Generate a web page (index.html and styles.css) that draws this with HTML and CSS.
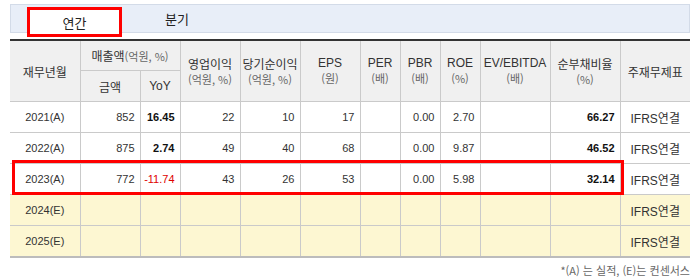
FILE: index.html
```
<!DOCTYPE html>
<html lang="ko">
<head>
<meta charset="utf-8">
<link rel="stylesheet" href="styles.css">
</head>
<body>
<div class="wrap">
  <div class="tabbar">
    <div class="tab active">연간</div>
    <div class="tab">분기</div>
  </div>
  <div class="tablebox">
    <table class="fin">
      <colgroup>
        <col style="width:70px"><col style="width:60px"><col style="width:40px"><col style="width:60px"><col style="width:60px"><col style="width:60px"><col style="width:40px"><col style="width:40px"><col style="width:40px"><col style="width:70px"><col style="width:70px"><col style="width:70px">
      </colgroup>
      <thead>
        <tr class="h1">
          <th rowspan="2" class="first">재무년월</th>
          <th colspan="2">매출액<span class="sub">(억원, %)</span></th>
          <th rowspan="2">영업이익<br><span class="sub">(억원, %)</span></th>
          <th rowspan="2">당기순이익<br><span class="sub">(억원, %)</span></th>
          <th rowspan="2" class="en">EPS<br><span class="sub">(원)</span></th>
          <th rowspan="2" class="en">PER<br><span class="sub">(배)</span></th>
          <th rowspan="2" class="en">PBR<br><span class="sub">(배)</span></th>
          <th rowspan="2" class="en">ROE<br><span class="sub">(%)</span></th>
          <th rowspan="2" class="en">EV/EBITDA<br><span class="sub">(배)</span></th>
          <th rowspan="2">순부채비율<br><span class="sub">(%)</span></th>
          <th rowspan="2" class="last">주재무제표</th>
        </tr>
        <tr class="h2">
          <th>금액</th>
          <th class="en">YoY</th>
        </tr>
      </thead>
      <tbody>
        <tr>
          <td class="first yr">2021(A)</td><td>852</td><td class="b">16.45</td><td>22</td><td>10</td><td>17</td><td></td><td>0.00</td><td>2.70</td><td></td><td class="b">66.27</td><td class="last std">IFRS연결</td>
        </tr>
        <tr>
          <td class="first yr">2022(A)</td><td>875</td><td class="b">2.74</td><td>49</td><td>40</td><td>68</td><td></td><td>0.00</td><td>9.87</td><td></td><td class="b">46.52</td><td class="last std">IFRS연결</td>
        </tr>
        <tr>
          <td class="first yr">2023(A)</td><td>772</td><td class="neg">-11.74</td><td>43</td><td>26</td><td>53</td><td></td><td>0.00</td><td>5.98</td><td></td><td class="b">32.14</td><td class="last std">IFRS연결</td>
        </tr>
        <tr class="est">
          <td class="first yr">2024(E)</td><td></td><td></td><td></td><td></td><td></td><td></td><td></td><td></td><td></td><td></td><td class="last std">IFRS연결</td>
        </tr>
        <tr class="est">
          <td class="first yr">2025(E)</td><td></td><td></td><td></td><td></td><td></td><td></td><td></td><td></td><td></td><td></td><td class="last std">IFRS연결</td>
        </tr>
      </tbody>
    </table>
    <div class="highlight"></div>
  </div>
  <div class="note">*(A) 는 실적, (E)는 컨센서스</div>
</div>
</body>
</html>
```
FILE: styles.css
```
html, body {
  margin: 0;
  padding: 0;
  background: #fff;
}
body {
  font-family: "Noto Sans CJK KR", "Liberation Sans", sans-serif;
  color: #333;
}
.wrap {
  width: 680px;
  padding: 4px 0 0 10px;
}
.tabbar {
  box-sizing: border-box;
  height: 29px;
  background: #e8eef8;
  border: 1px solid #d3dbe8;
  display: flex;
  padding-left: 16px;
}
.tab {
  box-sizing: border-box;
  width: 95px;
  height: 30px;
  margin-top: 2px;
  display: flex;
  align-items: center;
  justify-content: center;
  font-size: 13px;
  color: #222;
  line-height: 1;
}
.tab + .tab {
  width: 110px;
  margin-top: 0;
  height: 27px;
}
.tab.active {
  background: #fff;
  border: 3px solid #f00;
}
.tablebox {
  position: relative;
  margin-top: 6px;
}
.fin {
  width: 680px;
  table-layout: fixed;
  border-collapse: collapse;
  border-top: 2px solid #333;
  border-bottom: 2px solid #bcbcbc;
}
.fin th, .fin td {
  border: 1px solid #cacaca;
  padding: 0;
}
.fin th {
  background: #f0f0f0;
  font-weight: normal;
  font-size: 12px;
  color: #333;
  line-height: 15px;
  text-align: center;
}
.fin .h1 th { height: 29px; }
.fin .h2 th { height: 30px; }
.fin th.en {
  font-family: "Liberation Sans", sans-serif;
  font-size: 12px;
}
.fin .sub {
  font-family: "Noto Sans CJK KR", sans-serif;
  font-size: 11px;
  color: #666;
}
.fin .first { border-left: none; }
.fin .last { border-right: none; }
.fin td {
  height: 30px;
  font-family: "Liberation Sans", sans-serif;
  font-size: 11px;
  color: #333;
  text-align: right;
  padding-right: 5px;
}
.fin td.yr {
  text-align: center;
  padding-right: 0;
  font-size: 11px;
}
.fin td.std {
  text-align: center;
  padding-right: 0;
  font-size: 12px;
  font-family: "Liberation Sans", "Noto Sans CJK KR", sans-serif;
}
.fin td.b {
  font-weight: bold;
  color: #111;
}
.fin td.neg {
  color: #e00000;
}
.fin tr.est td {
  background: #fdf7d2;
}
.highlight {
  position: absolute;
  left: 2px;
  top: 121px;
  width: 612px;
  height: 35px;
  box-sizing: border-box;
  border: 3px solid #f00;
  pointer-events: none;
}
.note {
  text-align: right;
  font-size: 11px;
  color: #666;
  margin-top: 5px;
  line-height: 14px;
}
```
